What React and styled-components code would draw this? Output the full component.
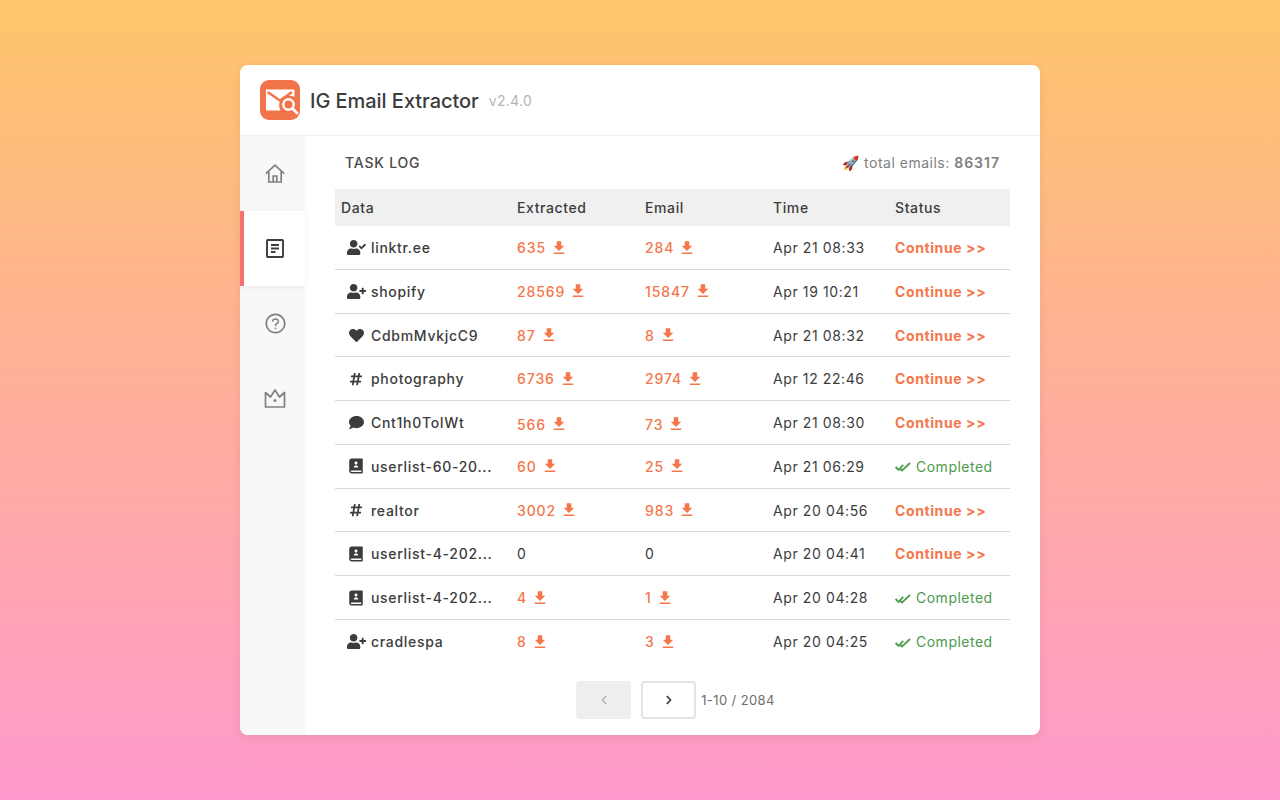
import styled, { createGlobalStyle } from "styled-components";
import { FaUserCheck, FaUserPlus, FaHeart, FaHashtag, FaComment, FaChevronLeft, FaChevronRight } from "react-icons/fa";
import { MdFileDownload } from "react-icons/md";
import { RiContactsBook2Fill } from "react-icons/ri";
import { AiOutlineQuestionCircle } from "react-icons/ai";

const GlobalStyle = createGlobalStyle`
  html, body { margin: 0; padding: 0; }
  * { box-sizing: border-box; }
  body { font-family: Inter, "Liberation Sans", sans-serif; color: #3c3c3c; }
`;

const rows = [
  { icon: "check", name: "linktr.ee", extracted: 635, email: 284, time: "Apr 21 08:33", done: false },
  { icon: "plus", name: "shopify", extracted: 28569, email: 15847, time: "Apr 19 10:21", done: false },
  { icon: "heart", name: "CdbmMvkjcC9", extracted: 87, email: 8, time: "Apr 21 08:32", done: false },
  { icon: "hash", name: "photography", extracted: 6736, email: 2974, time: "Apr 12 22:46", done: false },
  { icon: "comment", name: "Cnt1h0ToIWt", extracted: 566, email: 73, time: "Apr 21 08:30", done: false, drop: true },
  { icon: "book", name: "userlist-60-20...", extracted: 60, email: 25, time: "Apr 21 06:29", done: true },
  { icon: "hash", name: "realtor", extracted: 3002, email: 983, time: "Apr 20 04:56", done: false },
  { icon: "book", name: "userlist-4-202...", extracted: 0, email: 0, time: "Apr 20 04:41", done: false },
  { icon: "book", name: "userlist-4-202...", extracted: 4, email: 1, time: "Apr 20 04:28", done: true },
  { icon: "plus", name: "cradlespa", extracted: 8, email: 3, time: "Apr 20 04:25", done: true },
];

const typeIcons = {
  check: <FaUserCheck size={19} />,
  plus: <FaUserPlus size={19} />,
  heart: <FaHeart size={15} />,
  hash: <FaHashtag size={14} />,
  comment: <FaComment size={15} />,
  book: <RiContactsBook2Fill size={18} />,
};

function Logo() {
  return (
    <svg width="40" height="40" viewBox="0 0 40 40">
      <rect width="40" height="40" rx="9" fill="#f2744a" />
      <path d="M6 9.5h27.5a1 1 0 0 1 1 1V17a10 10 0 0 0-14 13.5H7a1 1 0 0 1-1-1z" fill="#fff" />
      <path d="M7.5 12l12.5 8.5L32 12" fill="none" stroke="#f2744a" strokeWidth="2.4" />
      <circle cx="28.5" cy="24.5" r="5.2" fill="#f2744a" stroke="#fff" strokeWidth="2.4" />
      <path d="M32.5 28.5l4.5 4.5" stroke="#fff" strokeWidth="2.6" strokeLinecap="round" />
    </svg>
  );
}

function HomeIcon() {
  return (
    <svg width="20" height="19" viewBox="0 0 20 19" fill="none" stroke="currentColor" strokeWidth="1.7">
      <path d="M0.8 9.6L10 1.2l9.2 8.4" />
      <path d="M3.8 7.5v10.5h12.4V7.5" />
      <path d="M8.2 18v-6h3.6v6" />
    </svg>
  );
}

function LogIcon() {
  return (
    <svg width="18" height="19" viewBox="0 0 18 19" fill="none" stroke="currentColor" strokeWidth="1.9">
      <rect x="1" y="1" width="16" height="17" rx="0.8" />
      <path d="M5 6h8M5 9.5h8M5 13h4.5" />
    </svg>
  );
}

function CrownIcon() {
  return (
    <svg width="22" height="19" viewBox="0 0 22 19" fill="none" stroke="currentColor" strokeWidth="1.7" strokeLinejoin="round">
      <path d="M1.5 3.5l5 4.5L11 1l4.5 7 5-4.5v14.5h-19z" />
      <circle cx="11" cy="11.5" r="1.5" fill="currentColor" stroke="none" />
    </svg>
  );
}

function DoubleCheck() {
  return (
    <svg width="16" height="11" viewBox="0 0 16 11" fill="none" stroke="currentColor" strokeWidth="1.8">
      <path d="M0.6 6l3 3 4.6-5.2" />
      <path d="M5.4 8l1.6 1.6L15 2" />
    </svg>
  );
}

function Count({ value, drop }) {
  if (value === 0) return <PlainCell>0</PlainCell>;
  return (
    <CountCell $drop={drop}>
      {value}
      <MdFileDownload size={18} />
    </CountCell>
  );
}

export default function App() {
  return (
    <Page>
      <GlobalStyle />
      <Card>
        <Header>
          <Logo />
          <Title>IG Email Extractor</Title>
          <Version>v2.4.0</Version>
        </Header>
        <Body>
          <Sidebar>
            <NavItem><HomeIcon /></NavItem>
            <NavItem $active><LogIcon /></NavItem>
            <NavItem><AiOutlineQuestionCircle size={23} /></NavItem>
            <NavItem><CrownIcon /></NavItem>
          </Sidebar>
          <Main>
            <TopRow>
              <Heading>TASK LOG</Heading>
              <Total>🚀 total emails: <strong>86317</strong></Total>
            </TopRow>
            <Table>
              <HeadRow>
                <span>Data</span>
                <span>Extracted</span>
                <span>Email</span>
                <span>Time</span>
                <span>Status</span>
              </HeadRow>
              {rows.map((row, i) => (
                <Row key={i}>
                  <NameCell>
                    <TypeIcon>{typeIcons[row.icon]}</TypeIcon>
                    <Name>{row.name}</Name>
                  </NameCell>
                  <Count value={row.extracted} drop={row.drop} />
                  <Count value={row.email} drop={row.drop} />
                  <PlainCell>{row.time}</PlainCell>
                  {row.done ? (
                    <Completed><DoubleCheck />Completed</Completed>
                  ) : (
                    <Continue>Continue &gt;&gt;</Continue>
                  )}
                </Row>
              ))}
            </Table>
            <Pager>
              <PageButton disabled><FaChevronLeft size={10} /></PageButton>
              <PageButton><FaChevronRight size={10} /></PageButton>
              <PageInfo>1-10 / 2084</PageInfo>
            </Pager>
          </Main>
        </Body>
      </Card>
    </Page>
  );
}

const Page = styled.div`
  width: 100%;
  height: 800px;
  display: flex;
  align-items: center;
  justify-content: center;
  background: linear-gradient(180deg, #ffc56a 0%, #ff99cc 100%);
`;

const Card = styled.div`
  width: 800px;
  height: 670px;
  background: #fff;
  border-radius: 8px;
  overflow: hidden;
  display: flex;
  flex-direction: column;
  box-shadow: 0 2px 10px rgba(0, 0, 0, 0.08);
`;

const Header = styled.header`
  height: 71px;
  flex: none;
  display: flex;
  align-items: center;
  padding: 0 20px;
  border-bottom: 1px solid #f0f0f0;
`;

const Title = styled.h1`
  margin: 2px 0 0 10px;
  font-size: 20px;
  font-weight: 500;
  letter-spacing: -0.05px;
  color: #3c3c3c;
`;

const Version = styled.span`
  margin: 1px 0 0 10px;
  font-size: 14px;
  letter-spacing: 0.3px;
  color: #b4b4b4;
`;

const Body = styled.div`
  flex: 1;
  display: flex;
  min-height: 0;
`;

const Sidebar = styled.nav`
  width: 65px;
  flex: none;
  background: #f8f8f8;
`;

const NavItem = styled.div`
  height: 75px;
  display: flex;
  align-items: center;
  justify-content: center;
  padding-left: ${(p) => (p.$active ? "1px" : "5px")};
  color: ${(p) => (p.$active ? "#3c3c3c" : "#808080")};
  background: ${(p) => (p.$active ? "#fff" : "transparent")};
  border-left: ${(p) => (p.$active ? "4px solid #f87171" : "none")};
  box-shadow: ${(p) => (p.$active ? "0 2px 8px rgba(0, 0, 0, 0.05)" : "none")};
`;

const Main = styled.main`
  flex: 1;
  min-width: 0;
  padding: 0 30px;
`;

const TopRow = styled.div`
  height: 53px;
  display: flex;
  align-items: center;
  justify-content: space-between;
  padding: 0 10px;
`;

const Heading = styled.h2`
  margin: 0;
  font-size: 14px;
  font-weight: 500;
  letter-spacing: 0.8px;
  color: #4a4a4a;
`;

const Total = styled.span`
  font-size: 14px;
  letter-spacing: 0.5px;
  color: #808080;

  strong {
    font-weight: 600;
    letter-spacing: 1px;
  }
`;

const Table = styled.div`
  display: flex;
  flex-direction: column;
`;

const columns = "176px 128px 128px 122px 1fr";

const HeadRow = styled.div`
  height: 37px;
  display: grid;
  grid-template-columns: ${columns};
  align-items: center;
  padding-left: 6px;
  background: #f0f0f0;
  font-size: 14px;
  font-weight: 500;
  letter-spacing: 0.6px;
  color: #3c3c3c;
`;

const Row = styled.div`
  height: 43.75px;
  display: grid;
  grid-template-columns: ${columns};
  align-items: center;
  padding: 0.5px 0 0 6px;
  font-size: 14px;
  letter-spacing: 0.6px;
  border-bottom: 1px solid #d8d8d8;

  &:last-child {
    border-bottom: none;
  }
`;

const NameCell = styled.div`
  display: flex;
  align-items: center;
  min-width: 0;
`;

const TypeIcon = styled.span`
  width: 30px;
  flex: none;
  display: flex;
  justify-content: center;
  color: #3c3c3c;
`;

const Name = styled.span`
  font-weight: 500;
  letter-spacing: 0.7px;
  white-space: nowrap;
`;

const CountCell = styled.div`
  display: flex;
  align-items: center;
  gap: 4px;
  margin-top: ${(p) => (p.$drop ? "3px" : "0")};
  font-weight: 500;
  letter-spacing: 0.9px;
  color: #f4764a;
`;

const PlainCell = styled.div`
  color: #3c3c3c;
`;

const Continue = styled.div`
  font-weight: 700;
  color: #f4764a;
`;

const Completed = styled.div`
  display: flex;
  align-items: center;
  gap: 5px;
  color: #4c9a4c;
  letter-spacing: 0.5px;

  svg {
    margin-top: 1px;
  }
`;

const Pager = styled.div`
  margin: 17px 0 0 6px;
  display: flex;
  align-items: center;
  justify-content: center;
  gap: 10px;
`;

const PageButton = styled.button`
  width: 55px;
  height: 38px;
  display: flex;
  align-items: center;
  justify-content: center;
  padding: 0;
  border-radius: 4px;
  border: 2px solid ${(p) => (p.disabled ? "#eeeeee" : "#e4e4e4")};
  background: ${(p) => (p.disabled ? "#eeeeee" : "#fff")};
  color: ${(p) => (p.disabled ? "#b4b4b4" : "#3c3c3c")};
`;

const PageInfo = styled.span`
  margin-left: -5px;
  font-size: 13px;
  letter-spacing: 0.4px;
  color: #6e6e6e;
`;
